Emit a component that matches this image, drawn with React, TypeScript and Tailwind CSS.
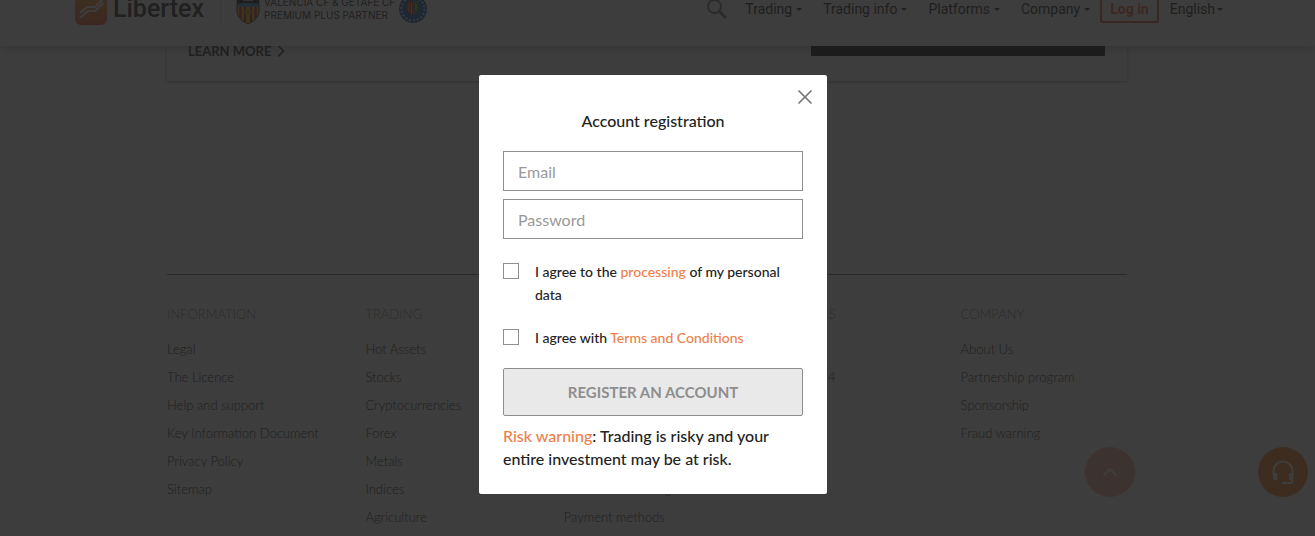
import React, { useState } from 'react';
import { ChevronRight, ChevronUp, X } from 'lucide-react';

const NAV_ITEMS = ['Trading', 'Trading info', 'Platforms', 'Company'];

const FOOTER_COLUMNS = [
  {
    title: 'INFORMATION',
    links: ['Legal', 'The Licence', 'Help and support', 'Key Information Document', 'Privacy Policy', 'Sitemap'],
  },
  {
    title: 'TRADING',
    links: ['Hot Assets', 'Stocks', 'Cryptocurrencies', 'Forex', 'Metals', 'Indices', 'Agriculture'],
  },
  {
    title: 'TRADERS',
    links: ['Education', 'News', 'Analytics', 'Calendar', 'Signals', 'Courses for trading', 'Payment methods'],
  },
  {
    title: 'PLATFORMS',
    links: ['Libertex', 'MetaTrader 4'],
  },
  {
    title: 'COMPANY',
    links: ['About Us', 'Partnership program', 'Sponsorship', 'Fraud warning'],
  },
];

function Logo() {
  return (
    <svg className="h-8 w-8 shrink-0" viewBox="0 0 32 32" aria-hidden="true">
      <defs>
        <linearGradient id="logo-fill" x1="0" y1="0" x2="0" y2="1">
          <stop offset="0" stopColor="#f99d1c" />
          <stop offset="1" stopColor="#f0592a" />
        </linearGradient>
      </defs>
      <rect width="32" height="32" rx="6" fill="url(#logo-fill)" />
      <g fill="none" stroke="#fff" strokeWidth="2">
        <path d="M5 20l7-6 8 0 8-8" />
        <path d="M5 25l8-7 7 0 8-8" />
      </g>
    </svg>
  );
}

function ValenciaCrest() {
  return (
    <svg className="h-8 w-6 shrink-0" viewBox="0 0 24 32" aria-hidden="true">
      <path d="M1 11h22v7q0 8-11 13Q1 26 1 18z" fill="#f5c400" />
      <path d="M4.500 13v12M9 13v16M15 13v16M19.500 13v12" stroke="#d8232a" strokeWidth="2.400" />
      <path d="M1 10h22v4H1z" fill="#3d9bd8" />
      <path d="M1 11Q-1 5 5 4q4 0 7 3 3-3 7-3 6 1 4 7-5-1-11-1T1 11z" fill="#161616" />
      <path d="M7 8q3-2 5 0 2-2 5 0" fill="none" stroke="#ddd" />
      <circle cx="12" cy="19" r="3" fill="#d99a1c" />
      <path d="M1 11v7q0 8 11 13 11-5 11-13v-7" fill="none" stroke="#222" />
    </svg>
  );
}

function GetafeCrest() {
  return (
    <svg className="h-7 w-7 shrink-0" viewBox="0 0 28 28" aria-hidden="true">
      <circle cx="14" cy="14" r="14" fill="#1b57a6" />
      <circle cx="14" cy="14" r="11.500" fill="none" stroke="#cfdcec" strokeWidth="2" strokeDasharray="2 2" />
      <circle cx="14" cy="13" r="9" fill="#1b57a6" />
      <path d="M8 6h6v14q-6-2-6-7z" fill="#d8232a" />
      <path d="M14 6h6v7q0 5-6 7z" fill="#2f8f4e" />
      <path d="M10 8v9M12.500 8v11M17 9v6" stroke="#f5c400" />
    </svg>
  );
}

function Caret() {
  return <span className="border-x-3 border-t-3 border-x-transparent border-t-[#222]" />;
}

function Header() {
  return (
    <header className="relative bg-white pr-[92px] pb-5 pl-[75px] shadow-[0_2px_12px_rgba(0,0,0,0.3)]">
      <div className="-mt-2 flex h-[34px] items-center">
        <a href="#" className="flex items-center gap-1.5 font-[Roboto,sans-serif] text-[25px] font-medium text-[#222]">
          <Logo />
          Libertex
        </a>
        <span className="ml-4 h-8 w-px bg-gray-300" />
        <div className="ml-[15px] flex items-center gap-1">
          <ValenciaCrest />
          <p className="font-[Inter,sans-serif] text-[10px] leading-[13px] whitespace-nowrap text-[#222]">
            VALENCIA CF &amp; GETAFE CF
            <br />
            PREMIUM PLUS PARTNER
          </p>
          <GetafeCrest />
        </div>

        <nav className="ml-auto flex items-center font-[Roboto,sans-serif] text-sm text-[#111]">
          <button type="button" aria-label="Search" className="mr-[18px]">
            <svg className="h-5 w-5" viewBox="0 0 20 20" fill="none" stroke="#777" strokeWidth="2">
              <circle cx="7.500" cy="7.500" r="6.500" />
              <path d="M12 12l7 7" strokeWidth="3" />
            </svg>
          </button>
          <div className="flex items-center gap-[21px]">
            {NAV_ITEMS.map((item) => (
              <a key={item} href="#" className="flex items-center gap-1 whitespace-nowrap">
                {item}
                <Caret />
              </a>
            ))}
          </div>
          <button
            type="button"
            className="ml-2.5 h-7 rounded-xs border-2 border-[#f0592a] px-2 font-bold whitespace-nowrap text-[#f0592a]"
          >
            Log in
          </button>
          <a href="#" className="ml-[11px] flex items-center gap-0.5">
            English
            <Caret />
          </a>
        </nav>
      </div>
    </header>
  );
}

function Footer() {
  return (
    <footer className="mt-[193px] border-t border-[#666] pt-[29px]">
      <div className="grid grid-cols-5 gap-x-8 text-[13px]">
        {FOOTER_COLUMNS.map((col) => (
          <div key={col.title}>
            <h3 className="leading-5 font-light text-[#777]">{col.title}</h3>
            <ul className="mt-[11px] leading-7 font-light whitespace-nowrap text-[#111]">
              {col.links.map((link) => (
                <li key={link}>
                  <a href="#">{link}</a>
                </li>
              ))}
            </ul>
          </div>
        ))}
      </div>
    </footer>
  );
}

function RegistrationModal() {
  const [email, setEmail] = useState('');
  const [password, setPassword] = useState('');

  const inputClass =
    'h-10 w-full border border-[#8e8e8e] bg-white px-3.5 text-base text-[#222] outline-none placeholder:text-[#999]';
  const checkClass = 'mt-[3px] h-4 w-4 shrink-0 appearance-none border border-[#8e8e8e] bg-white checked:bg-[#ee7f4b]';

  return (
    <div className="fixed inset-0 flex items-start justify-center bg-[#202020]/87 pt-[75px] pr-[9px]">
      <div
        role="dialog"
        aria-labelledby="modal-title"
        className="relative w-[348px] rounded-xs bg-white px-6 pt-[34px] pb-6 text-[#222]"
      >
        <button type="button" aria-label="Close" className="absolute top-2.5 right-2.5 text-[#777]">
          <X className="h-6 w-6" strokeWidth={1.75} />
        </button>
        <h2 id="modal-title" className="text-center text-base leading-6 font-medium">
          Account registration
        </h2>

        <form className="mt-[18px]" onSubmit={(e) => e.preventDefault()}>
          <div className="flex flex-col gap-2">
            <input
              type="email"
              aria-label="Email"
              placeholder="Email"
              className={inputClass}
              value={email}
              onChange={(e) => setEmail(e.target.value)}
            />
            <input
              type="password"
              aria-label="Password"
              placeholder="Password"
              className={inputClass}
              value={password}
              onChange={(e) => setPassword(e.target.value)}
            />
          </div>

          <div className="mt-[21px] flex flex-col gap-5 text-sm leading-[23px] font-medium">
            <div className="flex gap-4">
              <input id="agree-data" type="checkbox" className={checkClass} />
              <label htmlFor="agree-data">
                I agree to the <a href="#" className="text-[#ee7f4b]">processing</a> of my personal data
              </label>
            </div>
            <div className="flex gap-4">
              <input id="agree-terms" type="checkbox" className={checkClass} />
              <label htmlFor="agree-terms">
                I agree with <a href="#" className="text-[#ee7f4b]">Terms and Conditions</a>
              </label>
            </div>
          </div>

          <button
            type="submit"
            className="mt-[19px] h-12 w-full rounded-xs border border-[#8e8e8e] bg-[#e9e9e9] text-[15px] font-bold text-[#8e8e8e]"
          >
            REGISTER AN ACCOUNT
          </button>
        </form>

        <p className="mt-2 text-base leading-[23px] font-medium">
          <span className="text-[#ee7f4b]">Risk warning</span>: Trading is risky and your entire investment may be at
          risk.
        </p>
      </div>
    </div>
  );
}

export default function App() {
  return (
    <div className="h-screen overflow-hidden bg-white font-[Lato,sans-serif]">
      <Header />

      <main className="pr-[21px]">
        <div className="mx-auto max-w-[960px]">
          {/* Tail of the promo card */}
          <section className="flex items-start justify-between pr-[22px] pb-[25px] pl-[21px] shadow-[0_1px_3px_rgba(0,0,0,0.4)]">
            <a href="#" className="flex h-2.5 items-center text-[13px] leading-[10px] font-bold text-[#222]">
              LEARN MORE
              <ChevronRight className="h-5 w-5" />
            </a>
            <div className="h-2.5 w-[294px] bg-black" />
          </section>
          <Footer />
        </div>
      </main>

      <div className="fixed right-[7px] bottom-[39px] flex gap-[123px] text-white">
        <button
          type="button"
          aria-label="Back to top"
          className="flex h-[50px] w-[50px] items-center justify-center rounded-full bg-[#f0592a]/50"
        >
          <ChevronUp className="h-6 w-6" />
        </button>
        <button
          type="button"
          aria-label="Support"
          className="flex h-[50px] w-[50px] items-center justify-center rounded-full bg-[#f58220]"
        >
          <svg className="h-6 w-6" viewBox="0 0 24 24" fill="none" stroke="currentColor" strokeWidth="2">
            <path d="M2.500 15v-4a9.500 9.500 0 0 1 19 0v10q0 2-2 2H11" />
            <path d="M2 13h4v7H4q-2 0-2-2zM18 13h4v5q0 2-2 2h-2z" fill="currentColor" stroke="none" />
          </svg>
        </button>
      </div>

      <RegistrationModal />
    </div>
  );
}
